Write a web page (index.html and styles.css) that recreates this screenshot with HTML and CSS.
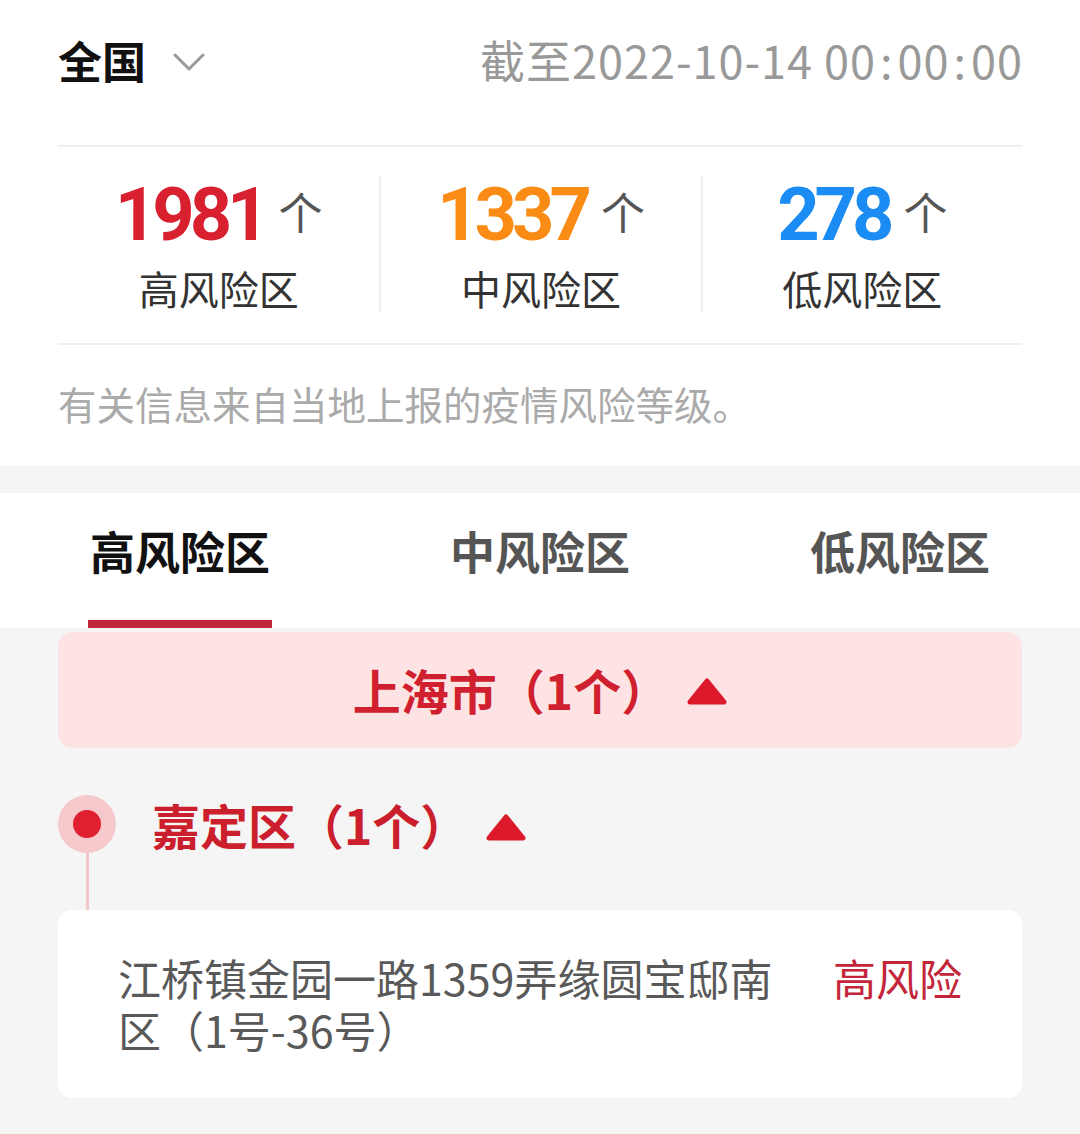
FILE: index.html
```html
<!DOCTYPE html>
<html lang="zh-CN">
<head>
<meta charset="utf-8">
<title>风险区</title>
<link rel="stylesheet" href="styles.css">
</head>
<body>
<div class="top">
  <div class="header">
    <div class="region">全国<svg class="chev" width="32" height="20" viewBox="0 0 32 20"><polyline points="2,3 16,17 30,3" fill="none" stroke="#999" stroke-width="3" stroke-linecap="round" stroke-linejoin="round"/></svg></div>
    <div class="date">截至2022-10-14 00<span class="colon">:</span>00<span class="colon">:</span>00</div>
  </div>
  <div class="stats">
    <div class="stat">
      <div class="num-row"><span class="num red">1981</span><span class="unit">个</span></div>
      <div class="label">高风险区</div>
    </div>
    <div class="stat">
      <div class="num-row"><span class="num orange">1337</span><span class="unit">个</span></div>
      <div class="label">中风险区</div>
    </div>
    <div class="stat">
      <div class="num-row"><span class="num blue">278</span><span class="unit">个</span></div>
      <div class="label">低风险区</div>
    </div>
  </div>
  <div class="note">有关信息来自当地上报的疫情风险等级。</div>
</div>

<div class="tabs">
  <div class="tab active">高风险区</div>
  <div class="tab">中风险区</div>
  <div class="tab">低风险区</div>
</div>

<div class="content">
  <div class="city">上海市（1个）<svg class="tri" width="40" height="27" viewBox="0 0 40 27"><polygon points="20,3 37,24 3,24" fill="#dc1a2c" stroke="#dc1a2c" stroke-width="5" stroke-linejoin="round"/></svg></div>
  <div class="district">
    <div class="dot"><div class="dot-inner"></div></div>
    <div class="district-name">嘉定区（1个）<svg class="tri" width="40" height="27" viewBox="0 0 40 27"><polygon points="20,3 37,24 3,24" fill="#dc1a2c" stroke="#dc1a2c" stroke-width="5" stroke-linejoin="round"/></svg></div>
  </div>
  <div class="connector"></div>
  <div class="card">
    <div class="addr">江桥镇金园一路1359弄缘圆宝邸南区（1号-36号）</div>
    <div class="level">高风险</div>
  </div>
</div>
</body>
</html>
```

FILE: styles.css
```css
html, body {
  margin: 0;
  padding: 0;
}
body {
  background: #f5f5f5;
  font-family: "Noto Sans CJK SC", sans-serif;
  width: 1080px;
  min-height: 1134px;
}
.top {
  background: #fff;
  padding: 16px 58px 39px;
}
.header {
  display: flex;
  justify-content: space-between;
  align-items: center;
  height: 88px;
}
.region {
  display: flex;
  align-items: center;
  font-size: 44px;
  line-height: 44px;
  font-weight: 700;
  color: #111;
}
.chev {
  margin-left: 27px;
  margin-top: 4px;
}
.date {
  font-size: 45px;
  line-height: 44px;
  letter-spacing: 1px;
  color: #999;
  margin-right: -1px;
}
.colon {
  margin: 0 4px;
}
.stats {
  margin-top: 41px;
  border-top: 2px solid #efefef;
  border-bottom: 2px solid #efefef;
  padding: 28px 0 31px;
  display: grid;
  grid-template-columns: 1fr 1fr 1fr;
}
.stat {
  padding-top: 8px;
  height: 129px;
}
.stat + .stat {
  border-left: 2px solid #efefef;
}
.num-row {
  display: flex;
  justify-content: center;
  align-items: flex-start;
  height: 64px;
}
.num {
  font-family: Roboto, sans-serif;
  font-weight: 700;
  font-size: 74px;
  line-height: 64px;
  letter-spacing: -5px;
}
.red { color: #d9202f; }
.orange { color: #fa8c16; }
.blue { color: #1b8cf3; }
.unit {
  font-size: 44px;
  line-height: 48px;
  margin-top: 4px;
  margin-left: 14px;
  color: #555;
}
.label {
  margin-top: 17px;
  text-align: center;
  font-size: 40px;
  line-height: 48px;
  color: #333;
}
.note {
  margin-top: 34px;
  font-size: 38.5px;
  line-height: 48px;
  color: #aaa;
}
.tabs {
  margin-top: 27px;
  background: #fff;
  height: 135px;
  box-sizing: border-box;
  padding: 30px 90px 0;
  display: flex;
  justify-content: space-between;
  align-items: flex-start;
}
.tab {
  font-size: 45px;
  line-height: 56px;
  font-weight: 700;
  color: #555;
}
.tab.active {
  color: #111;
}
.tab.active::after {
  content: "";
  display: block;
  margin-top: 41px;
  height: 8px;
  margin-left: -2px;
  margin-right: -2px;
  background: #c1283b;
}
.content {
  padding: 4px 58px 0;
}
.city {
  height: 116px;
  border-radius: 14px;
  background: #fee3e5;
  display: flex;
  justify-content: center;
  align-items: center;
  font-size: 48px;
  line-height: 56px;
  font-weight: 700;
  color: #d01f2e;
  padding-bottom: 3px;
  box-sizing: border-box;
}
.tri {
  margin-left: 18px;
  margin-top: 6px;
  flex: none;
}
.district {
  margin-top: 47px;
  display: flex;
  align-items: center;
  height: 58px;
}
.dot {
  width: 58px;
  height: 58px;
  border-radius: 50%;
  background: #f6c9cd;
  display: flex;
  justify-content: center;
  align-items: center;
  flex: none;
}
.dot-inner {
  width: 28px;
  height: 28px;
  border-radius: 50%;
  background: #e0202f;
}
.district-name {
  margin-left: 36px;
  display: flex;
  align-items: center;
  font-size: 48px;
  line-height: 58px;
  font-weight: 700;
  color: #cc1f2d;
}
.connector {
  width: 3px;
  height: 57px;
  margin-left: 28px;
  background: #f2c5c9;
}
.card {
  background: #fff;
  border-radius: 14px;
  padding: 41px 60px 43px;
  display: flex;
  align-items: flex-start;
}
.addr {
  flex: 1;
  font-size: 43px;
  line-height: 52px;
  color: #595959;
}
.level {
  margin-left: 40px;
  font-size: 43px;
  line-height: 52px;
  color: #c3263a;
  white-space: nowrap;
}
```
